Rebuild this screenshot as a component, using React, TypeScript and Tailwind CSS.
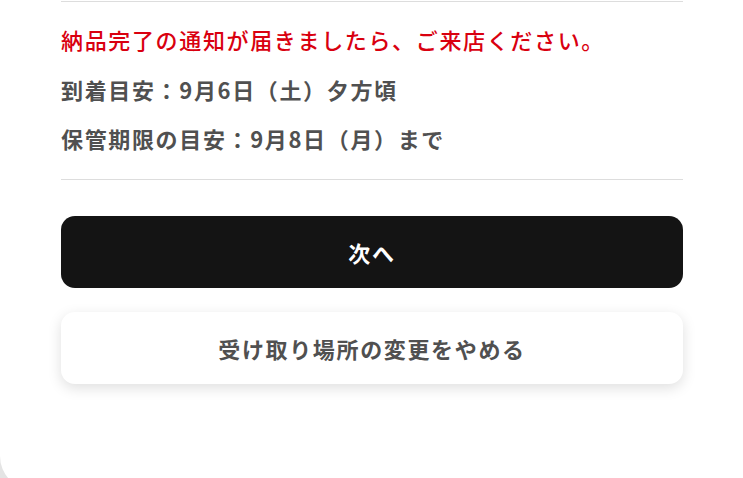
import React from "react";

const font = "font-['Noto_Sans_CJK_JP','Noto_Sans',sans-serif]";

export default function App() {
  return (
    <div className={`h-[478px] overflow-hidden bg-[#e4e4e4] ${font}`}>
      <div className="h-[490px] rounded-bl-[34px] bg-white pl-[61px] pr-[60px]">
        <div className="h-px" />
        <div className="border-y border-[#dddddd] pb-[16px] pt-[14px]">
          <p className="-mt-px mb-px text-[22px] font-medium leading-[49px] tracking-[0.075em] text-[#d9000f]">
            納品完了の通知が届きましたら、ご来店ください。
          </p>
          <p className="text-[22px] font-bold leading-[49px] tracking-[0.075em] text-[#505050]">
            到着目安：9月6日（土）夕方頃
          </p>
          <p className="text-[22px] font-bold leading-[49px] tracking-[0.075em] text-[#505050]">
            保管期限の目安：9月8日（月）まで
          </p>
        </div>
        <div className="mt-[36px] flex flex-col gap-[24px]">
          <button className="flex h-[72px] w-full items-center justify-center rounded-[14px] bg-[#141414] text-[22px] font-bold tracking-[0.075em] text-white">
            次へ
          </button>
          <button className="flex h-[72px] w-full items-center justify-center rounded-[14px] bg-white text-[22px] font-bold tracking-[0.075em] text-[#505050] shadow-[0_4px_14px_rgba(0,0,0,0.13)]">
            受け取り場所の変更をやめる
          </button>
        </div>
      </div>
    </div>
  );
}
